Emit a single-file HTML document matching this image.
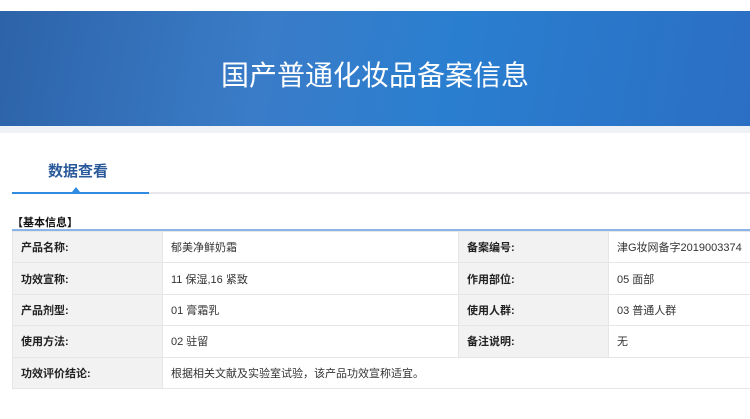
<!DOCTYPE html><html><head><meta charset="utf-8"><style>
body{margin:0;width:750px;height:419px;background:#fff;font-family:"Liberation Sans","Noto Sans CJK SC",sans-serif;overflow:hidden;position:relative}
.banner{position:absolute;top:11px;left:0;width:750px;height:115px;background:linear-gradient(100deg,#2d63a8 0%,#3a7cc8 35%,#2a7ed0 60%,#2b6fc4 100%)}
.banner h1{margin:0;position:absolute;width:100%;top:43px;text-align:center;color:#fff;font-weight:normal;font-size:28px;font-family:"Noto Sans CJK SC",sans-serif}
.strip{position:absolute;top:126px;left:0;width:750px;height:7px;background:#eef1f5}
.tab{position:absolute;left:48px;top:160px;font-size:15px;font-weight:bold;color:#2a5a9a}
.gl{position:absolute;left:12px;top:192px;width:738px;height:2px;background:#e6e8ec}
.bl{position:absolute;left:12px;top:192px;width:137px;height:2px;background:#2f8be0}
.tri{position:absolute;left:72px;top:187px;width:0;height:0;border-left:4px solid transparent;border-right:4px solid transparent;border-bottom:5px solid #2f8be0}
.sec{position:absolute;left:12px;top:214px;font-size:11px;font-weight:bold;color:#111}
.line{position:absolute;left:12px;top:229px;width:738px;height:2px;background:#8ab4e8}
table{position:absolute;left:12px;top:231px;width:740px;border-collapse:collapse;font-size:11px;color:#333;table-layout:fixed}
td{height:31.4px;border:1px solid #e6e6e6;padding:0 0 0 8px;box-sizing:border-box;white-space:nowrap}
td.l{background:#f2f2f2;font-weight:bold;color:#222}
</style></head><body>
<div class="banner"><h1>国产普通化妆品备案信息</h1></div>
<div class="strip"></div>
<div class="tab">数据查看</div>
<div class="gl"></div><div class="bl"></div><div class="tri"></div>
<div class="sec">【基本信息】</div>
<div class="line"></div>
<table>
<colgroup><col style="width:150px"><col style="width:296px"><col style="width:150px"><col></colgroup>
<tr><td class="l">产品名称:</td><td>郁美净鲜奶霜</td><td class="l">备案编号:</td><td>津G妆网备字2019003374</td></tr>
<tr><td class="l">功效宣称:</td><td>11 保湿,16 紧致</td><td class="l">作用部位:</td><td>05 面部</td></tr>
<tr><td class="l">产品剂型:</td><td>01 膏霜乳</td><td class="l">使用人群:</td><td>03 普通人群</td></tr>
<tr><td class="l">使用方法:</td><td>02 驻留</td><td class="l">备注说明:</td><td>无</td></tr>
<tr><td class="l">功效评价结论:</td><td colspan="3">根据相关文献及实验室试验，该产品功效宣称适宜。</td></tr>
</table>
</body></html>
